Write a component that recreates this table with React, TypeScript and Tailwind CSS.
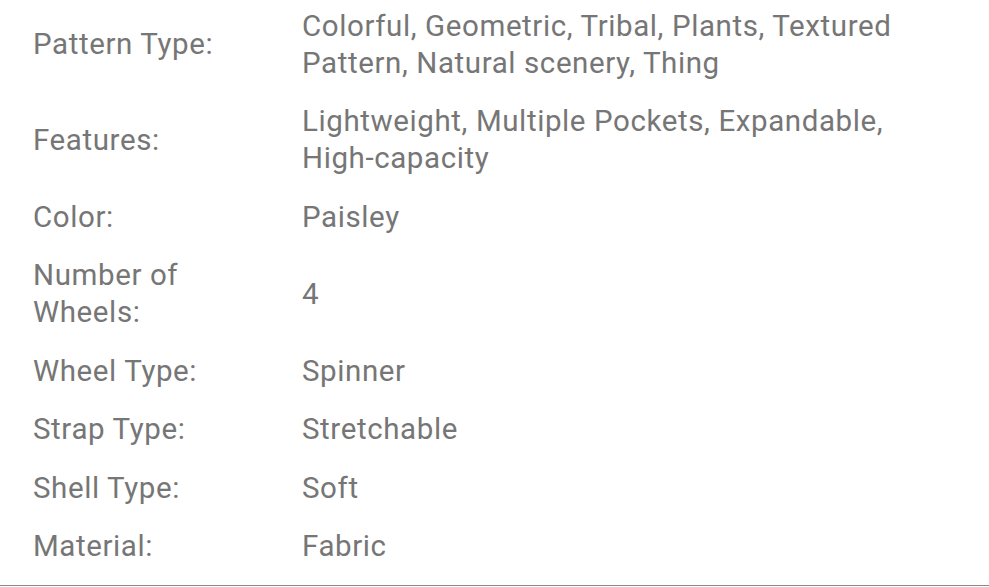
import React from "react";

const rows: [string, string][] = [
  ["Pattern Type:", "Colorful, Geometric, Tribal, Plants, Textured Pattern, Natural scenery, Thing"],
  ["Features:", "Lightweight, Multiple Pockets, Expandable, High-capacity"],
  ["Color:", "Paisley"],
  ["Number of Wheels:", "4"],
  ["Wheel Type:", "Spinner"],
  ["Strap Type:", "Stretchable"],
  ["Shell Type:", "Soft"],
  ["Material:", "Fabric"],
];

export default function App() {
  return (
    <div className="w-[989px] h-[587px] overflow-hidden bg-white" style={{ fontFamily: "Roboto, 'Noto Sans', sans-serif" }}>
      <div className="-mt-[3px] pb-[9px] border-b border-[#8a8a8a] text-[29.5px] tracking-[0.6px] leading-[37px] text-[#767676]">
        {rows.map(([k, v]) => (
          <div key={k} className="flex items-center pl-[33px] pr-[33px] py-[10.75px]">
            <div className="w-[237px] shrink-0">{k}</div>
            <div className="ml-[32px] flex-1">{v}</div>
          </div>
        ))}
      </div>
    </div>
  );
}
